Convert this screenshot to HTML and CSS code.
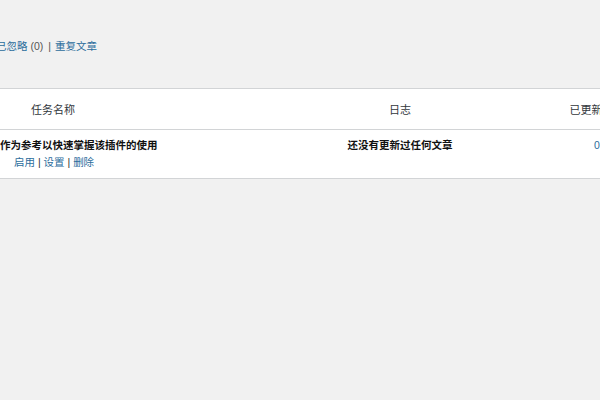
FILE: index.html
```html
<!DOCTYPE html>
<html lang="zh-CN">
<head>
    <meta charset="UTF-8">
    <title>任务列表</title>
    <link rel="stylesheet" href="styles.css">
</head>
<body>

    <div class="wrap">
        <ul class="subsubsub">
            <li><a href="#" class="plain">已忽略</a> <span class="count">(0)</span> <span class="sep">|</span></li>
            <li><a href="#">重复文章</a></li>
        </ul>

        <table class="tasks">
            <colgroup>
                <col class="c-name">
                <col class="c-log">
                <col class="c-count">
            </colgroup>
            <thead>
                <tr>
                    <th class="col-name">任务名称</th>
                    <th class="col-log">日志</th>
                    <th class="col-count">已更新文章</th>
                </tr>
            </thead>
            <tbody>
                <tr>
                    <td class="col-name">
                        <strong class="title">作为参考以快速掌握该插件的使用</strong>
                        <div class="row-actions">
                            <a href="#">启用</a> | <a href="#">设置</a> | <a href="#">删除</a>
                        </div>
                    </td>
                    <td class="col-log"><strong>还没有更新过任何文章</strong></td>
                    <td class="col-count"><a href="#">0</a></td>
                </tr>
            </tbody>
        </table>
    </div>

</body>
</html>
```

FILE: styles.css
```css
html, body {
    margin: 0;
    padding: 0;
    background-color: #f1f1f1;
    overflow: hidden;
}
body {
    color: #333;
    font-family: 'Liberation Sans', 'Noto Sans CJK SC', sans-serif;
    font-size: 10.5px;
}
a {
    color: #2c6d9c;
    text-decoration: none;
}
.wrap {
    margin-left: -10px;
}
.subsubsub {
    list-style: none;
    margin: 0;
    padding: 38px 0 0 6px;
    line-height: 16px;
    display: flex;
    gap: 4px;
}
.subsubsub .count {
    color: #555;
}
.subsubsub .sep {
    color: #555;
    margin-left: 2px;
}
.tasks {
    margin-top: 34px;
    width: 704px;
    border-collapse: collapse;
    table-layout: fixed;
    background-color: #fff;
    border-top: 1px solid #d2d4d6;
    border-bottom: 1px solid #d2d4d6;
}
.c-name {
    width: 310px;
}
.c-log {
    width: 200px;
}
.c-count {
    width: 194px;
}
.tasks th {
    height: 40px;
    padding: 0;
    font-weight: normal;
    font-size: 11px;
    color: #32373c;
    border-bottom: 1px solid #d2d4d6;
}
.tasks td {
    padding: 7px 0 8px;
    vertical-align: top;
    line-height: 16px;
}
.tasks .col-name {
    text-align: left;
    padding-left: 10px;
}
.tasks th.col-name {
    padding-left: 41px;
}
.tasks .col-log,
.tasks .col-count {
    text-align: center;
}
.title {
    display: block;
    color: #111;
}
.row-actions {
    margin-top: 1px;
    padding-left: 14px;
    color: #333;
}
.col-log strong {
    color: #111;
}
```
